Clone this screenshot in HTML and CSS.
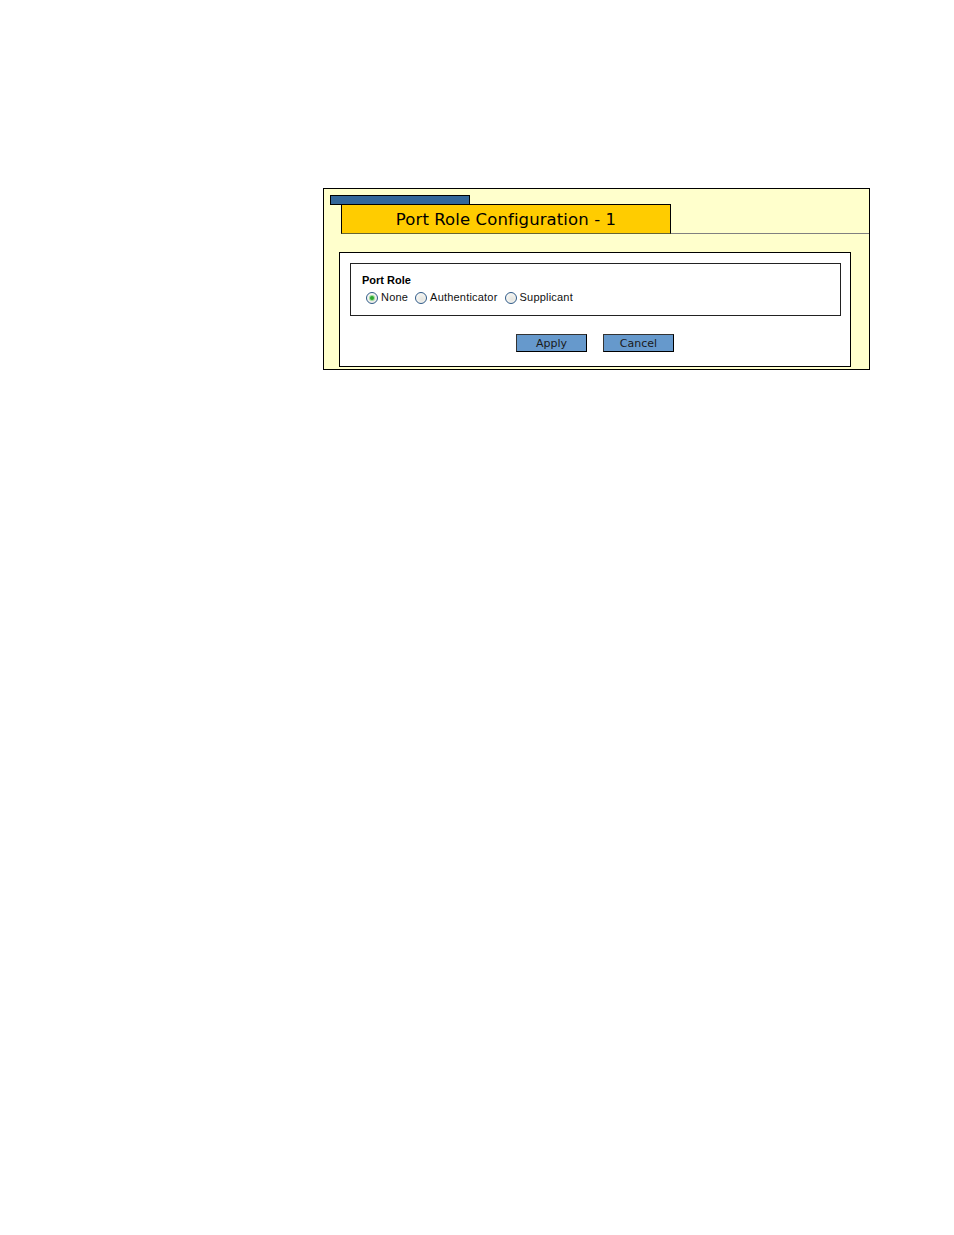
FILE: index.html
```html
<!DOCTYPE html>
<html>
<head>
<meta charset="utf-8">
<title>Port Role Configuration</title>
<link rel="stylesheet" href="styles.css">
</head>
<body>
<div class="panel">
  <div class="tab-head">
    <div class="tab-marker"></div>
    <div class="tab-row">
      <div class="tab-title">Port Role Configuration - 1</div>
      <div class="tab-rule"></div>
    </div>
  </div>
  <div class="form-box">
    <div class="group">
      <div class="group-label">Port Role</div>
      <div class="radios">
        <label class="radio"><span class="dot checked"></span>None</label>
        <label class="radio"><span class="dot"></span>Authenticator</label>
        <label class="radio"><span class="dot"></span>Supplicant</label>
      </div>
    </div>
    <div class="buttons">
      <button class="btn">Apply</button>
      <button class="btn">Cancel</button>
    </div>
  </div>
</div>
</body>
</html>
```

FILE: styles.css
```css
html, body {
  margin: 0;
  padding: 0;
  background: #ffffff;
}

body {
  padding: 188px 0 0 323px;
  font-family: "DejaVu Sans", Verdana, sans-serif;
}

.panel {
  box-sizing: border-box;
  width: 547px;
  height: 182px;
  border: 1px solid #000000;
  background: #ffffcc;
  padding: 6px 0 0 0;
}

.tab-head {
  display: flex;
  flex-direction: column;
}

.tab-marker {
  box-sizing: border-box;
  margin-left: 6px;
  width: 140px;
  height: 10px;
  background: #336699;
  border: 1px solid #000000;
}

.tab-row {
  display: flex;
  align-items: flex-end;
  margin-top: -1px;
  padding-left: 17px;
}

.tab-title {
  box-sizing: border-box;
  width: 330px;
  height: 30px;
  background: #ffcc00;
  border: 1px solid #000000;
  border-bottom-color: #666633;
  font-size: 16.5px;
  letter-spacing: 0.1px;
  color: #000000;
  text-align: center;
  line-height: 29px;
}

.tab-rule {
  flex: 1;
  height: 0;
  border-bottom: 1px solid #808080;
}

.form-box {
  box-sizing: border-box;
  margin: 18px 0 0 15px;
  width: 512px;
  height: 115px;
  background: #ffffff;
  border: 1px solid #000000;
  padding: 10px 0 0 10px;
}

.group {
  box-sizing: border-box;
  width: 491px;
  height: 53px;
  border: 1px solid #222222;
  padding: 10px 0 0 11px;
  font-family: "Liberation Sans", Arial, sans-serif;
  font-size: 11px;
  color: #000000;
}

.group-label {
  font-weight: bold;
  line-height: 13px;
}

.radios {
  display: flex;
  margin-top: 3px;
  padding-left: 4px;
  gap: 7px;
}

.radio {
  display: flex;
  align-items: center;
  gap: 3px;
  line-height: 14px;
  letter-spacing: 0.2px;
  color: #111111;
}

.dot {
  box-sizing: border-box;
  width: 12px;
  height: 12px;
  margin-top: 1px;
  border-radius: 50%;
  border: 1px solid #2f5a88;
  background: radial-gradient(circle at 60% 60%, #e4e4df 0%, #f4f4f0 60%, #ffffff 100%);
  display: flex;
  align-items: center;
  justify-content: center;
}

.dot.checked::after {
  content: "";
  width: 4px;
  height: 4px;
  border-radius: 50%;
  background: #2da82d;
  box-shadow: 0 0 0 1px #9fdc9f;
}

.buttons {
  display: flex;
  justify-content: center;
  gap: 16px;
  margin-top: 18px;
  padding-right: 10px;
}

.btn {
  box-sizing: border-box;
  width: 71px;
  height: 18px;
  padding: 1px 0 0 0;
  margin: 0;
  background: #6699cc;
  border: 1px solid #000000;
  border-left-color: #333333;
  border-top-color: #333333;
  font-family: "DejaVu Sans", Verdana, sans-serif;
  font-size: 11px;
  color: #1a1a1a;
  line-height: 15px;
}
```
